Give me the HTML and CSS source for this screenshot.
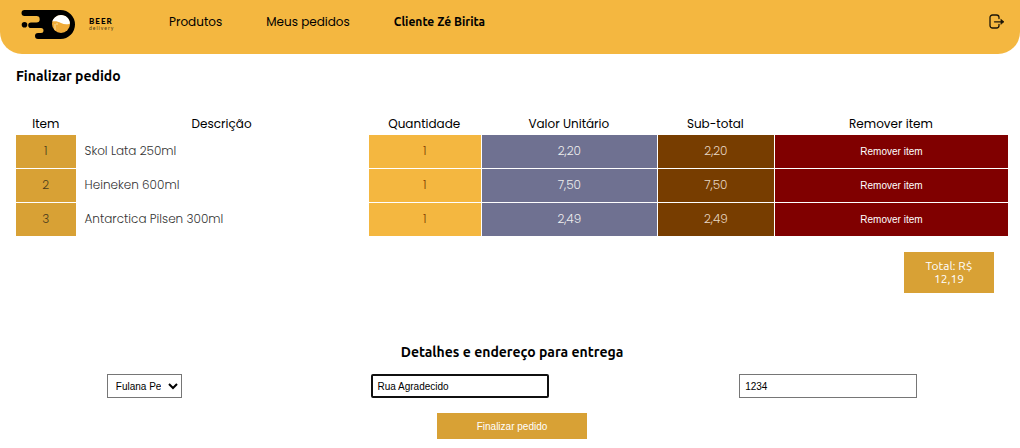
FILE: index.html
```html
<!DOCTYPE html>
<html lang="pt-BR">
<head>
<meta charset="utf-8">
<meta name="viewport" content="width=device-width, initial-scale=1">
<title>Finalizar pedido</title>
<link rel="stylesheet" href="styles.css">
</head>
<body>
<header class="topbar">
  <div class="brand">
    <svg class="brand-mark" width="56" height="32" viewBox="0 0 56 32" aria-hidden="true">
      <path d="M3.500 2H39.500a14.500 14.500 0 0 1 0 29H17a3 3 0 0 1 0-6h3a2.500 2.500 0 0 0 0-5H10a2.800 2.800 0 0 1 0-5.600h5.500a3 3 0 0 0 0-6.400H3.500a3 3 0 0 1 0-6z"/>
      <circle cx="3.500" cy="16.700" r="2.800"/>
      <circle cx="40" cy="16" r="9" fill="#f0ab38"/>
      <path d="M31.300 13.600C32.500 10 35.700 7 40 7c5 0 8.500 3.500 9 8.500-3 1.400-6 1-9-.6-3-1.500-6-1.900-8.700-1.300z" fill="#fff"/>
      <path d="M34 16v6M36 15v2" stroke="#f9dda0" stroke-width="1" fill="none"/>
    </svg>
    <div class="brand-name"><span class="brand-title">BEER</span><span class="brand-sub">delivery</span></div>
  </div>
  <nav class="nav">
    <a class="nav-link" href="#produtos">Produtos</a>
    <a class="nav-link" href="#pedidos">Meus pedidos</a>
    <span class="nav-user">Cliente Zé Birita</span>
  </nav>
  <button class="logout" type="button" aria-label="Sair">
    <svg width="16" height="16" viewBox="0 0 16 16" fill="none" stroke="#1c1608" stroke-width="1.300" stroke-linecap="round" stroke-linejoin="round" aria-hidden="true">
      <path d="M10 4.500V3.500A2.500 2.500 0 0 0 7.500 1H3.500A2.500 2.500 0 0 0 1 3.500v8A2.500 2.500 0 0 0 3.500 14h4a2.500 2.500 0 0 0 2.500-2.500v-1"/>
      <path d="M5.500 7.800H14"/>
      <path d="M12 5.300l3 2.500-3 2.500z" fill="#1c1608" stroke-width=".5"/>
    </svg>
  </button>
</header>
<main class="page">
  <h1 class="title">Finalizar pedido</h1>
  <table class="items">
    <colgroup><col class="c-item"><col><col class="c-qty"><col class="c-unit"><col class="c-sub"><col class="c-remove"></colgroup>
    <thead>
      <tr><th>Item</th><th>Descrição</th><th>Quantidade</th><th>Valor Unitário</th><th>Sub-total</th><th>Remover item</th></tr>
    </thead>
    <tbody>
      <tr><td class="item">1</td><td class="desc">Skol Lata 250ml</td><td class="qty">1</td><td class="unit">2,20</td><td class="sub">2,20</td><td class="remove"><button class="remove-btn" type="button">Remover item</button></td></tr>
      <tr><td class="item">2</td><td class="desc">Heineken 600ml</td><td class="qty">1</td><td class="unit">7,50</td><td class="sub">7,50</td><td class="remove"><button class="remove-btn" type="button">Remover item</button></td></tr>
      <tr><td class="item">3</td><td class="desc">Antarctica Pilsen 300ml</td><td class="qty">1</td><td class="unit">2,49</td><td class="sub">2,49</td><td class="remove"><button class="remove-btn" type="button">Remover item</button></td></tr>
    </tbody>
  </table>
  <p class="total">Total: R$ 12,19</p>
  <form class="delivery">
    <h2 class="subtitle">Detalhes e endereço para entrega</h2>
    <div class="fields">
      <select class="field seller" aria-label="Vendedora"><option>Fulana Pereira</option></select>
      <input class="field street" type="text" aria-label="Endereço" value="Rua Agradecido">
      <input class="field" type="text" aria-label="Número" value="1234">
    </div>
    <button class="submit" type="button">Finalizar pedido</button>
  </form>
</main>
</body>
</html>
```
FILE: styles.css
```css
* { box-sizing: border-box; }
body {
  margin: 0;
  background: #fff;
  color: #000;
  font-family: Poppins, Inter, sans-serif;
  font-size: 12px;
  line-height: 18px;
}
.topbar {
  display: flex;
  align-items: flex-start;
  height: 54px;
  padding: 8px 15px 0 21px;
  background: #f4b740;
  border-radius: 0 0 22px 22px;
}
.brand { display: flex; gap: 12px; width: 148px; }
.brand-mark { display: block; }
.brand-name { padding-top: 10px; font-family: Lato, sans-serif; }
.brand-title, .brand-sub { display: block; letter-spacing: 1px; }
.brand-title { font-size: 8px; line-height: 7px; font-weight: 900; }
.brand-sub { font-size: 5px; line-height: 6px; color: #4a3714; }
.nav { display: flex; flex: 1; gap: 44px; padding-top: 5px; }
.nav-link { color: #000; text-decoration: none; }
.nav-user, .title, .subtitle { font-family: Ubuntu, "Noto Sans", sans-serif; font-weight: 700; }
.logout {
  width: 16px;
  margin-top: 6px;
  padding: 0;
  border: 0;
  background: none;
  line-height: 0;
  cursor: pointer;
}
.page { padding: 12px 12px 8px 16px; }
.title, .subtitle { margin: 0; font-size: 14px; line-height: 20px; }
.items {
  width: 100%;
  margin-top: 28px;
  table-layout: fixed;
  border-spacing: 0;
}
.c-item { width: 6%; }
.c-qty { width: 11.4%; }
.c-unit { width: 17.75%; }
.c-sub { width: 11.8%; }
.c-remove { width: 23.6%; }
.items th { height: 20px; padding: 0; font-weight: 400; }
.items td {
  height: 34px;
  padding: 0 0 2px;
  border-top: 1px solid #fff;
  border-left: 1px solid #fff;
  text-align: center;
  font-weight: 300;
}
.items .item { border-left: 0; background: #d8a135; color: #4a3c1c; }
.items .desc { padding-left: 8px; text-align: left; color: #333; }
.items .qty { background: #f4b740; color: #803a00; }
.items .unit { background: #6f7191; color: #eee; }
.items .sub { background: #773d00; color: #e8d8c4; }
.items .remove { padding: 0; background: #800000; }
.remove-btn {
  display: block;
  width: 100%;
  height: 33px;
  padding: 0;
  border: 0;
  background: none;
  color: #fff;
  font: 10px "Liberation Sans", sans-serif;
  cursor: pointer;
}
.total {
  width: 90px;
  margin: 16px 14px 0 auto;
  padding: 7px 16px 8px;
  background: #d8a135;
  color: #fff;
  font: 12px/13px Ubuntu, "Noto Sans", sans-serif;
  text-align: center;
}
.delivery { margin: 49px -4px 0; text-align: center; }
.fields { display: flex; justify-content: space-around; margin-top: 12px; }
.field {
  width: 178px;
  height: 24px;
  padding: 0 5px;
  border: 1px solid #767676;
  border-radius: 0;
  background: #fff;
  color: #000;
  font: 10px "Liberation Sans", sans-serif;
}
.seller { width: 75px; padding: 0 4px; }
.street { padding: 0 4px; border: 2px solid #101010; border-radius: 2px; outline: 0; }
.submit {
  width: 150px;
  height: 26px;
  margin-top: 15px;
  border: 0;
  background: #d8a135;
  color: #fff;
  font: 10px "Liberation Sans", sans-serif;
  cursor: pointer;
}
```
